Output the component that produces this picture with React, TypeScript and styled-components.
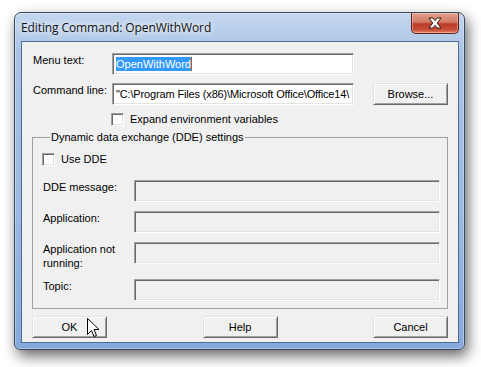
import React from "react";
import styled, { createGlobalStyle } from "styled-components";

const GlobalStyle = createGlobalStyle`
  html, body {
    margin: 0;
    padding: 0;
    background: #ffffff;
  }
  body {
    width: 481px;
    height: 367px;
    overflow: hidden;
    font-family: "Liberation Sans", Arial, sans-serif;
  }
`;

const Page = styled.div`
  position: relative;
  width: 481px;
  height: 367px;
  padding: 12px 0 0 14px;
  box-sizing: border-box;
`;

const Window = styled.div`
  width: 451px;
  height: 338px;
  box-sizing: border-box;
  display: flex;
  flex-direction: column;
  padding: 0 5px 6px 6px;
  border: 1px solid #3a4a5e;
  border-radius: 7px 7px 6px 6px;
  background: linear-gradient(180deg, #c3d6ee 0%, #a9c3e6 12%, #9ab8e2 60%, #86a9dc 100%);
  box-shadow: 0 0 0 1px rgba(255, 255, 255, 0.35) inset, 3px 6px 14px rgba(0, 0, 0, 0.6);
`;

const TitleBar = styled.div`
  height: 28px;
  display: flex;
  align-items: flex-start;
  justify-content: space-between;
  flex-shrink: 0;
`;

const Title = styled.span`
  margin-top: 7px;
  font-family: "Open Sans", "Noto Sans", sans-serif;
  font-size: 12px;
  line-height: 16px;
  color: #111;
  letter-spacing: -0.1px;
  text-shadow: 0 0 6px #fff, 0 0 10px rgba(255, 255, 255, 0.9);
`;

const CloseButton = styled.div`
  width: 46px;
  height: 20px;
  display: flex;
  align-items: center;
  justify-content: center;
  border: 1px solid #5a2318;
  border-top: none;
  border-radius: 0 0 5px 5px;
  background: linear-gradient(180deg, #e4a090 0%, #d27a66 45%, #bc3a24 55%, #c9503a 85%, #e08868 100%);
  box-shadow: inset 0 0 0 1px rgba(255, 210, 200, 0.45);
`;

const Client = styled.div`
  flex: 1;
  display: flex;
  flex-direction: column;
  background: #f0f0f0;
  border: 1px solid #4e6a8e;
  padding: 11px 0 0 10px;
  font-size: 11px;
  color: #000;
`;

const Row = styled.div<{ $top?: number }>`
  display: flex;
  align-items: flex-start;
  margin-top: ${(p) => p.$top ?? 0}px;
`;

const Label = styled.div<{ $width: number }>`
  width: ${(p) => p.$width}px;
  flex-shrink: 0;
  line-height: 14px;
  padding-left: 1px;
`;

const sunken = `
  box-sizing: border-box;
  border: 1px solid;
  border-color: #a0a0a0 #ffffff #ffffff #a0a0a0;
  box-shadow: inset 1px 1px 0 #696969, inset -1px -1px 0 #e3e3e3;
`;

const TextBox = styled.div<{ $width: number; $disabled?: boolean; $tight?: boolean }>`
  ${sunken}
  width: ${(p) => p.$width}px;
  height: 22px;
  padding: 3px 0 0 3px;
  background: ${(p) => (p.$disabled ? "#f0f0f0" : "#ffffff")};
  white-space: nowrap;
  overflow: hidden;
  line-height: 14px;
  letter-spacing: ${(p) => (p.$tight ? "-0.15px" : "0")};
`;

const Selected = styled.span`
  background: #3399ff;
  color: #fff;
  padding: 1px 0;
  border-right: 1px solid #c05a10;
`;

const Button = styled.div`
  box-sizing: border-box;
  width: 75px;
  height: 22px;
  display: flex;
  align-items: center;
  justify-content: center;
  background: #f0f0f0;
  border: 1px solid;
  border-color: #e3e3e3 #696969 #696969 #e3e3e3;
  box-shadow: inset 1px 1px 0 #ffffff, inset -1px -1px 0 #a0a0a0;
  padding-bottom: 1px;
`;

const BrowseButton = styled(Button)`
  margin-left: 19px;
`;

const CheckRow = styled.label<{ $left: number; $top: number }>`
  display: flex;
  align-items: center;
  gap: 6px;
  margin-left: ${(p) => p.$left}px;
  margin-top: ${(p) => p.$top}px;
  line-height: 13px;
`;

const CheckBox = styled.span`
  ${sunken}
  width: 13px;
  height: 13px;
  background: #fff;
  display: inline-block;
`;

const GroupBox = styled.fieldset`
  width: 416px;
  box-sizing: border-box;
  margin: 5px 0 0 0;
  padding: 0 7px 7px 9px;
  border: 1px solid #a0a0a0;
  min-inline-size: 0;
`;

const Legend = styled.legend`
  padding: 0 1px;
  margin-left: 8px;
  line-height: 13px;
`;

const GroupRows = styled.div`
  display: flex;
  flex-direction: column;
  gap: 9px;
  margin-top: 14px;
`;

const ButtonBar = styled.div`
  width: 416px;
  display: flex;
  justify-content: space-between;
  margin-top: 7px;
`;

const Cursor = styled.svg`
  position: absolute;
  left: 87px;
  top: 318px;
`;

const CloseGlyph = () => (
  <svg width="16" height="12" viewBox="0 0 16 12">
    <path
      d="M2 1 L6 1 L8 3.6 L10 1 L14 1 L10.3 6 L14 11 L10 11 L8 8.4 L6 11 L2 11 L5.7 6 Z"
      fill="#ffffff"
      stroke="#3b1a14"
      strokeWidth="1"
      strokeLinejoin="round"
    />
  </svg>
);

const rows = [
  { label: ["DDE message:"] },
  { label: ["Application:"] },
  { label: ["Application not", "running:"] },
  { label: ["Topic:"] },
];

export default function App() {
  return (
    <Page>
      <GlobalStyle />
      <Window>
        <TitleBar>
          <Title>Editing Command: OpenWithWord</Title>
          <CloseButton>
            <CloseGlyph />
          </CloseButton>
        </TitleBar>
        <Client>
          <Row>
            <Label $width={79}>Menu text:</Label>
            <TextBox $width={242}>
              <Selected>OpenWithWord</Selected>
            </TextBox>
          </Row>
          <Row $top={8}>
            <Label $width={79}>Command line:</Label>
            <TextBox $width={242} $tight>
              "C:\Program Files (x86)\Microsoft Office\Office14\
            </TextBox>
            <BrowseButton>Browse...</BrowseButton>
          </Row>
          <CheckRow $left={79} $top={8}>
            <CheckBox />
            Expand environment variables
          </CheckRow>
          <GroupBox>
            <Legend>Dynamic data exchange (DDE) settings</Legend>
            <CheckRow $left={0} $top={9}>
              <CheckBox />
              Use DDE
            </CheckRow>
            <GroupRows>
              {rows.map((r) => (
                <Row key={r.label[0]}>
                  <Label $width={91}>
                    {r.label.map((l) => (
                      <div key={l}>{l}</div>
                    ))}
                  </Label>
                  <TextBox $width={307} $disabled />
                </Row>
              ))}
            </GroupRows>
          </GroupBox>
          <ButtonBar>
            <Button>OK</Button>
            <Button>Help</Button>
            <Button>Cancel</Button>
          </ButtonBar>
        </Client>
      </Window>
      <Cursor width="13" height="21" viewBox="0 0 13 21">
        <path
          d="M0.5 0.5 L0.5 16.5 L4.5 12.5 L7 18.5 L9.5 17.5 L7 11.5 L12 11.5 Z"
          fill="#ffffff"
          stroke="#000000"
          strokeWidth="1"
          strokeLinejoin="miter"
        />
      </Cursor>
    </Page>
  );
}
